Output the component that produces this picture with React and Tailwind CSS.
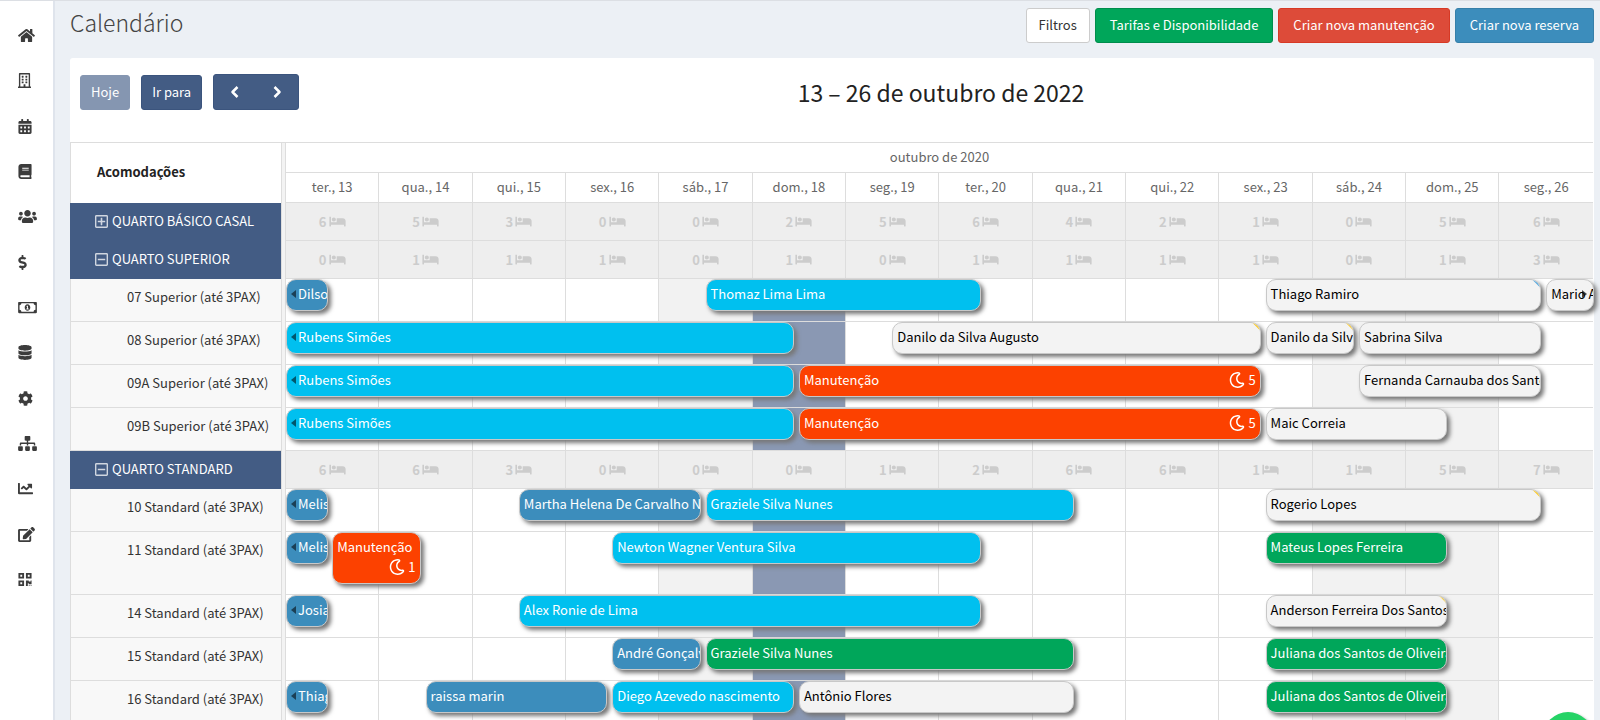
import React, { useState } from 'react';
import clsx from 'clsx';
import { ChevronLeft, ChevronRight } from 'lucide-react';
import {
  FaHome,
  FaRegBuilding,
  FaCalendarAlt,
  FaBook,
  FaUsers,
  FaDollarSign,
  FaRegMoneyBillAlt,
  FaDatabase,
  FaCog,
  FaSitemap,
  FaChartLine,
  FaEdit,
  FaQrcode,
  FaBed,
  FaRegMoon,
  FaRegPlusSquare,
  FaRegMinusSquare,
  FaWhatsapp,
} from 'react-icons/fa';

const menu = [
  { label: 'Início', icon: FaHome, size: 'w-[17px]' },
  { label: 'Propriedade', icon: FaRegBuilding, size: 'w-[13px]' },
  { label: 'Calendário', icon: FaCalendarAlt, size: 'w-[14px]' },
  { label: 'Reservas', icon: FaBook, size: 'w-[14px]' },
  { label: 'Hóspedes', icon: FaUsers, size: 'w-[19px]' },
  { label: 'Tarifas', icon: FaDollarSign, size: 'w-[9px]' },
  { label: 'Caixa', icon: FaRegMoneyBillAlt, size: 'w-[19px]' },
  { label: 'Cadastros', icon: FaDatabase, size: 'w-[14px]' },
  { label: 'Configurações', icon: FaCog, size: 'w-[15px]' },
  { label: 'Canais', icon: FaSitemap, size: 'w-[19px]' },
  { label: 'Relatórios', icon: FaChartLine, size: 'w-[15px]' },
  { label: 'Editar', icon: FaEdit, size: 'w-[17px]' },
  { label: 'QR Code', icon: FaQrcode, size: 'w-[14px]' },
];

const days = [
  { label: 'ter., 13' },
  { label: 'qua., 14' },
  { label: 'qui., 15' },
  { label: 'sex., 16' },
  { label: 'sáb., 17', weekend: true },
  { label: 'dom., 18', today: true },
  { label: 'seg., 19' },
  { label: 'ter., 20' },
  { label: 'qua., 21' },
  { label: 'qui., 22' },
  { label: 'sex., 23' },
  { label: 'sáb., 24', weekend: true },
  { label: 'dom., 25', weekend: true },
  { label: 'seg., 26' },
];

// start and end are counted in half days from the first visible day
const groups = [
  {
    name: 'QUARTO BÁSICO CASAL',
    free: [6, 5, 3, 0, 0, 2, 5, 6, 4, 2, 1, 0, 5, 6],
    rooms: [],
  },
  {
    name: 'QUARTO SUPERIOR',
    free: [0, 1, 1, 1, 0, 1, 0, 1, 1, 1, 1, 0, 1, 3],
    rooms: [
      {
        name: '07 Superior (até 3PAX)',
        events: [
          { title: 'Dilson', start: 0, end: 1, kind: 'blue', before: true },
          { title: 'Thomaz Lima Lima', start: 9, end: 15, kind: 'cyan' },
          { title: 'Thiago Ramiro', start: 21, end: 27, kind: 'gray', flag: 'blue' },
          { title: 'Mario Alves', start: 27, end: 28, kind: 'gray', after: true },
        ],
      },
      {
        name: '08 Superior (até 3PAX)',
        events: [
          { title: 'Rubens Simões', start: 0, end: 11, kind: 'cyan', before: true },
          { title: 'Danilo da Silva Augusto', start: 13, end: 21, kind: 'gray', flag: 'yellow' },
          { title: 'Danilo da Silva', start: 21, end: 23, kind: 'gray', flag: 'yellow' },
          { title: 'Sabrina Silva', start: 23, end: 27, kind: 'gray' },
        ],
      },
      {
        name: '09A Superior (até 3PAX)',
        events: [
          { title: 'Rubens Simões', start: 0, end: 11, kind: 'cyan', before: true },
          { title: 'Manutenção', start: 11, end: 21, kind: 'orange', nights: 5 },
          { title: 'Fernanda Carnauba dos Santos', start: 23, end: 27, kind: 'gray' },
        ],
      },
      {
        name: '09B Superior (até 3PAX)',
        events: [
          { title: 'Rubens Simões', start: 0, end: 11, kind: 'cyan', before: true },
          { title: 'Manutenção', start: 11, end: 21, kind: 'orange', nights: 5 },
          { title: 'Maic Correia', start: 21, end: 25, kind: 'gray' },
        ],
      },
    ],
  },
  {
    name: 'QUARTO STANDARD',
    free: [6, 6, 3, 0, 0, 0, 1, 2, 6, 6, 1, 1, 5, 7],
    rooms: [
      {
        name: '10 Standard (até 3PAX)',
        events: [
          { title: 'Melissa', start: 0, end: 1, kind: 'blue', before: true },
          { title: 'Martha Helena De Carvalho Nunes', start: 5, end: 9, kind: 'blue' },
          { title: 'Graziele Silva Nunes', start: 9, end: 17, kind: 'cyan' },
          { title: 'Rogerio Lopes', start: 21, end: 27, kind: 'gray', flag: 'yellow' },
        ],
      },
      {
        name: '11 Standard (até 3PAX)',
        tall: true,
        events: [
          { title: 'Melissa', start: 0, end: 1, kind: 'blue', before: true },
          { title: 'Manutenção', start: 1, end: 3, kind: 'orange', nights: 1 },
          { title: 'Newton Wagner Ventura Silva', start: 7, end: 15, kind: 'cyan' },
          { title: 'Mateus Lopes Ferreira', start: 21, end: 25, kind: 'green' },
        ],
      },
      {
        name: '14 Standard (até 3PAX)',
        events: [
          { title: 'Josias', start: 0, end: 1, kind: 'blue', before: true },
          { title: 'Alex Ronie de Lima', start: 5, end: 15, kind: 'cyan' },
          { title: 'Anderson Ferreira Dos Santos', start: 21, end: 25, kind: 'gray', flag: 'yellow' },
        ],
      },
      {
        name: '15 Standard (até 3PAX)',
        events: [
          { title: 'André Gonçalves', start: 7, end: 9, kind: 'blue' },
          { title: 'Graziele Silva Nunes', start: 9, end: 17, kind: 'green' },
          { title: 'Juliana dos Santos de Oliveira', start: 21, end: 25, kind: 'green' },
        ],
      },
      {
        name: '16 Standard (até 3PAX)',
        events: [
          { title: 'Thiago', start: 0, end: 1, kind: 'blue', before: true },
          { title: 'raissa marin', start: 3, end: 7, kind: 'blue' },
          { title: 'Diego Azevedo nascimento', start: 7, end: 11, kind: 'cyan' },
          { title: 'Antônio Flores', start: 11, end: 17, kind: 'gray' },
          { title: 'Juliana dos Santos de Oliveira', start: 21, end: 25, kind: 'green' },
        ],
      },
    ],
  },
];

const kinds = {
  blue: 'bg-[#3c8dbc] text-white',
  cyan: 'bg-[#00c0ef] text-white',
  gray: 'bg-[#f3f3f3] text-black',
  orange: 'bg-[#fc4100] text-white',
  green: 'bg-[#00a65a] text-white',
};

const flags = {
  blue: 'bg-[#5aa9dc]',
  yellow: 'bg-[#f8c92c]',
};

const Event = ({ event }) => {
  const { title, start, end, kind, before, after, flag, nights } = event;
  const span = (end - start) / 2;

  return (
    <a
      href="#"
      className={clsx(
        'absolute top-0 z-10 flex min-h-[31px] items-start overflow-hidden rounded-[10px] border border-[#c8c8c8] px-1 pt-1 pb-1.5 leading-5 shadow-[3px_3px_4px_#777]',
        nights && 'flex-wrap',
        kinds[kind]
      )}
      style={{
        left: start % 2 ? '50%' : 0,
        // each column is its own width plus a 1px border
        width: `calc((100% + 1px) * ${span} - ${after ? 0 : 5}px)`,
      }}
    >
      {before && (
        <span className="mt-1.5 mr-0.5 shrink-0 border-y-4 border-r-[5px] border-y-transparent border-r-black/55" />
      )}
      <span className="whitespace-nowrap">{title}</span>
      {nights && (
        <span className="ml-auto flex items-center gap-[3px]">
          <FaRegMoon className="size-4" />
          {nights}
        </span>
      )}
      {after && (
        <span className="absolute top-2.5 right-1.5 border-y-4 border-l-[5px] border-y-transparent border-l-black/70" />
      )}
      {flag && (
        <span
          className={clsx('absolute top-0 right-0 size-[7px] [clip-path:polygon(0_0,100%_0,100%_100%)]', flags[flag])}
        />
      )}
    </a>
  );
};

const Room = ({ room }) => (
  <tr className={room.tall ? 'h-[63px]' : 'h-[43px]'}>
    <th
      scope="row"
      className="border-b border-l border-[#ddd] bg-[#f8f8f8] pt-2 pl-14 text-left align-top font-normal leading-5 whitespace-nowrap text-[#333]"
    >
      {room.name}
    </th>
    <td className="border-x border-[#ddd] bg-[#f3f3f3]" />
    {days.map((day, i) => (
      <td
        key={day.label}
        className={clsx(
          'relative border-b border-[#ddd] p-0',
          i < days.length - 1 && 'border-r',
          day.weekend && 'bg-[#f2f2f2]',
          day.today && 'bg-[#8a98b3]'
        )}
      >
        {room.events
          .filter((e) => Math.floor(e.start / 2) === i)
          .map((e) => (
            <Event key={e.start} event={e} />
          ))}
      </td>
    ))}
  </tr>
);

const Group = ({ group }) => {
  const [open, setOpen] = useState(group.rooms.length > 0);
  const Toggle = open ? FaRegMinusSquare : FaRegPlusSquare;

  return (
    <tbody>
      <tr className="h-[38px]">
        <th scope="rowgroup" className="bg-[#435c84] p-0 pb-0.5 pl-[25px] text-left font-normal text-white">
          <button type="button" onClick={() => setOpen(!open)} className="flex items-center gap-1 whitespace-nowrap">
            <Toggle className="h-[15px] w-[13px] text-white/75" />
            {group.name}
          </button>
        </th>
        <td className="border-x border-[#ddd] bg-[#f3f3f3]" />
        {group.free.map((n, i) => (
          <td
            key={i}
            className={clsx('border-b border-[#ddd] bg-[#eee] p-0', i < days.length - 1 && 'border-r')}
          >
            <span className="flex items-center justify-center gap-0.5 font-bold text-[#ccc]">
              {n}
              <FaBed className="h-[13px] w-[17px]" />
            </span>
          </td>
        ))}
      </tr>
      {open && group.rooms.map((room) => <Room key={room.name} room={room} />)}
    </tbody>
  );
};

const App = () => {
  return (
    <div className="flex h-screen overflow-hidden border-t border-[#dcdfe4] bg-[#ecf0f5] font-['Noto_Sans_CJK_SC','Noto_Sans',sans-serif] text-[13px] text-[#333]">
      {/* Sidebar */}
      <nav className="w-[55px] shrink-0 border-r-2 border-[#dfe4ec] bg-white pt-3">
        <ul className="grid h-[589px] auto-rows-fr">
          {menu.map(({ label, icon: Icon, size }) => (
            <li key={label}>
              <a href="#" aria-label={label} className="flex h-full items-center pl-[18px] text-[#3c3c3c]">
                <Icon className={clsx('h-[15px]', size)} />
              </a>
            </li>
          ))}
        </ul>
      </nav>

      <main className="min-w-0 flex-1 pr-1.5 pl-[15px]">
        {/* Page header */}
        <header className="flex h-[57px] items-start justify-between pt-[7px]">
          <h1 className="text-[23px] leading-7 font-light text-[#444]">Calendário</h1>
          <div className="flex gap-[5px] leading-5">
            <button type="button" className="h-[35px] rounded-[3px] border border-[#ccc] bg-white px-3 pb-0.5">
              Filtros
            </button>
            <button type="button" className="h-[35px] rounded-[3px] border border-[#008d4c] bg-[#00a65a] px-3.5 pb-0.5 text-white">
              Tarifas e Disponibilidade
            </button>
            <button type="button" className="h-[35px] rounded-[3px] border border-[#d73925] bg-[#dd4b39] px-3.5 pb-0.5 text-white">
              Criar nova manutenção
            </button>
            <button type="button" className="h-[35px] rounded-[3px] border border-[#367fa9] bg-[#3c8dbc] px-3.5 pb-0.5 text-white">
              Criar nova reserva
            </button>
          </div>
        </header>

        <section className="rounded-t-[3px] bg-white pr-px">
          {/* Toolbar */}
          <div className="flex items-center justify-between px-2.5 pt-4 pb-8">
            <div className="flex items-center gap-[11px] text-white">
              <button type="button" className="h-[35px] rounded-[3px] border border-[#8596b1] bg-[#8596b1] px-2.5">
                Hoje
              </button>
              <button type="button" className="h-[35px] rounded-[3px] border border-[#3b547d] bg-[#435c84] px-2.5">
                Ir para
              </button>
              <div className="flex h-9 w-[86px] rounded-[3px] border border-[#3b547d] bg-[#435c84]">
                <button type="button" aria-label="Anterior" className="flex flex-1 items-center justify-center">
                  <ChevronLeft className="size-5" strokeWidth={3} strokeLinecap="butt" />
                </button>
                <button type="button" aria-label="Próximo" className="flex flex-1 items-center justify-center">
                  <ChevronRight className="size-5" strokeWidth={3} strokeLinecap="butt" />
                </button>
              </div>
            </div>
            <h2 className="text-[23px] leading-9 text-[#222]">13 – 26 de outubro de 2022</h2>
            <div />
          </div>

          {/* Timeline */}
          <table className="w-full table-fixed border-separate border-spacing-0">
            <colgroup>
              <col className="w-[211px]" />
              <col className="w-[5px]" />
              {days.map((day) => (
                <col key={day.label} />
              ))}
            </colgroup>
            <thead className="text-[#666]">
              <tr className="h-[31px]">
                <th
                  rowSpan={2}
                  scope="col"
                  className="border-t border-l border-[#ddd] pb-0.5 pl-[26px] text-left font-bold text-[#222]"
                >
                  Acomodações
                </th>
                <td rowSpan={2} className="border border-b-0 border-[#ddd] bg-[#f3f3f3]" />
                <th colSpan={14} scope="colgroup" className="border-y border-[#ddd] p-0 pb-0.5 font-normal">
                  outubro de 2020
                </th>
              </tr>
              <tr className="h-[30px]">
                {days.map((day, i) => (
                  <th
                    key={day.label}
                    scope="col"
                    className={clsx(
                      'border-b border-[#ddd] p-0 pb-0.5 font-normal',
                      i < days.length - 1 && 'border-r'
                    )}
                  >
                    {day.label}
                  </th>
                ))}
              </tr>
            </thead>
            {groups.map((group) => (
              <Group key={group.name} group={group} />
            ))}
          </table>
        </section>
      </main>

      <a
        href="#"
        aria-label="WhatsApp"
        className="fixed right-[7px] -bottom-[42px] z-20 flex size-[50px] items-center justify-center rounded-full bg-[#25d366] text-white shadow-[2px_2px_3px_#999]"
      >
        <FaWhatsapp className="size-7" />
      </a>
    </div>
  );
};

export default App;
